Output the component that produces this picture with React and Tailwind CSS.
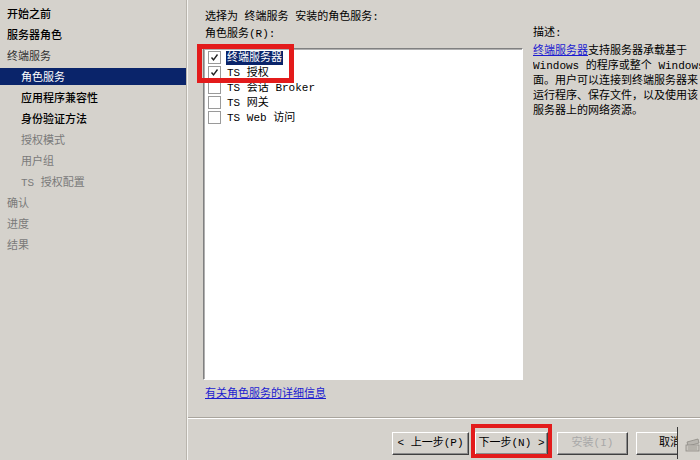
import React from "react";

const FONT = "font-['Liberation_Mono','Noto_Sans_CJK_SC',monospace]";

const steps = [
  { label: "开始之前", sub: false, tone: "text-black font-medium" },
  { label: "服务器角色", sub: false, tone: "text-black font-medium" },
  { label: "终端服务", sub: false, tone: "text-[#333]" },
  { label: "角色服务", sub: true, tone: "text-white", active: true },
  { label: "应用程序兼容性", sub: true, tone: "text-black font-medium" },
  { label: "身份验证方法", sub: true, tone: "text-black font-medium" },
  { label: "授权模式", sub: true, tone: "text-[#7a7a7a]" },
  { label: "用户组", sub: true, tone: "text-[#7a7a7a]" },
  { label: "TS 授权配置", sub: true, tone: "text-[#7a7a7a]" },
  { label: "确认", sub: false, tone: "text-[#7a7a7a]" },
  { label: "进度", sub: false, tone: "text-[#7a7a7a]" },
  { label: "结果", sub: false, tone: "text-[#7a7a7a]" },
];

const services = [
  { label: "终端服务器", checked: true, selected: true },
  { label: "TS 授权", checked: true },
  { label: "TS 会话 Broker", checked: false },
  { label: "TS 网关", checked: false },
  { label: "TS Web 访问", checked: false },
];

function CheckBox({ checked }) {
  return (
    <span className="w-[13px] h-[13px] shrink-0 bg-white border border-[#9a9a9a] flex items-center justify-center">
      {checked && (
        <svg width="9" height="9" viewBox="0 0 9 9">
          <path d="M1.5 4.5 L3.5 6.8 L7.5 1.5" fill="none" stroke="#222" strokeWidth="1.4" />
        </svg>
      )}
    </span>
  );
}

function WinButton({ children, className = "", disabled }) {
  return (
    <button
      type="button"
      className={
        "h-[23px] shrink-0 border border-t-white border-l-white border-b-[#404040] border-r-[#404040] bg-[#d5d2cc] shadow-[inset_-1px_-1px_0_#8c8c8c] text-[11px] leading-none flex items-center justify-center " +
        (disabled ? "text-[#a8a8a8] " : "text-black ") +
        className
      }
    >
      {children}
    </button>
  );
}

export default function App() {
  return (
    <div className={"w-[700px] h-[460px] bg-[#d5d2cc] flex overflow-hidden " + FONT}>
      {/* step list */}
      <aside className="w-[186px] shrink-0 pt-[5px] flex flex-col gap-[4px] text-[11px]">
        {steps.map((s) => (
          <div
            key={s.label}
            className={
              "h-[17px] pt-[2px] leading-[17px] whitespace-nowrap " +
              (s.sub ? "pl-[21px] " : "pl-[7px] ") +
              (s.active ? "bg-[#0a246a] " : "") +
              s.tone
            }
          >
            {s.label}
          </div>
        ))}
      </aside>
      <div className="w-[2px] shrink-0 border-l border-[#b9b5ad] bg-[#f4f3f0]" />

      <main className="flex-1 flex flex-col min-w-0">
        <div className="h-[417px] flex text-[11px]">
          <section className="relative w-[335px] shrink-0 pl-[15px] pt-[9px]">
            <div className="pl-[2px] leading-[17px] text-black whitespace-nowrap">
              <div>选择为 终端服务 安装的角色服务:</div>
              <div>角色服务(R):</div>
            </div>
            <div className="mt-[5px] w-[320px] h-[332px] bg-white border border-t-[#808080] border-l-[#808080] border-r-white border-b-white shadow-[inset_1px_1px_0_#b0b0b0] pt-[1px] pl-[4px]">
              {services.map((s) => (
                <div key={s.label} className="h-[15px] flex items-center whitespace-nowrap">
                  <CheckBox checked={s.checked} />
                  <span
                    className={
                      "ml-[5px] px-[1px] leading-[14px] " +
                      (s.selected ? "bg-[#0a246a] text-white" : "text-black")
                    }
                  >
                    {s.label}
                  </span>
                </div>
              ))}
            </div>
            <a className="block mt-[7px] pl-[2px] leading-[15px] text-[#1c1cd0] underline">
              有关角色服务的详细信息
            </a>
            <div className="absolute left-[9px] top-[44px] w-[97px] h-[39px] border-[5px] border-[#e31b1b]" />
          </section>

          <section className="ml-[10px] flex-1 min-w-0 overflow-hidden pt-[25px] whitespace-nowrap text-black">
            <div className="leading-[17px]">描述:</div>
            <div className="mt-[2px] leading-[15px]">
              <div>
                <span className="text-[#1c1cd0] underline">终端服务器</span>支持服务器承载基于
              </div>
              <div>Windows 的程序或整个 Windows 桌</div>
              <div>面。用户可以连接到终端服务器来</div>
              <div>运行程序、保存文件，以及使用该</div>
              <div>服务器上的网络资源。</div>
            </div>
          </section>
        </div>

        <div className="h-px bg-[#a9a59d]" />
        <div className="h-px bg-white" />

        <div className="flex items-start pt-[13px] pl-[204px]">
          <WinButton className="w-[77px]">&lt; 上一步(P)</WinButton>
          <div className="relative ml-[6px]">
            <WinButton className="w-[73px] border-t-[#404040]">下一步(N) &gt;</WinButton>
            <div className="absolute left-[-4px] right-[-4px] top-[-8px] bottom-[-3px] border-4 border-[#e31b1b]" />
          </div>
          <WinButton className="ml-[9px] w-[71px]" disabled>
            安装(I)
          </WinButton>
          <div className="ml-[8px] w-[41px] overflow-hidden shrink-0">
            <WinButton className="w-[68px]">取消</WinButton>
          </div>
          <div className="w-px h-[32px] -mt-[5px] bg-[#3a3a3a]" />
          <svg className="ml-[7px] mt-[6px]" width="15" height="14" viewBox="0 0 15 14">
            <path d="M2 4 L13 1 L14 5 L3 8 Z" fill="#b9b6b0" stroke="#8e8b85" strokeWidth="0.8" />
            <rect x="1" y="7" width="13" height="6" fill="#c8c5bf" stroke="#8e8b85" strokeWidth="0.8" />
            <path d="M3 9 H12 M3 11 H12" stroke="#9a978f" strokeWidth="0.8" />
          </svg>
        </div>
      </main>
    </div>
  );
}
